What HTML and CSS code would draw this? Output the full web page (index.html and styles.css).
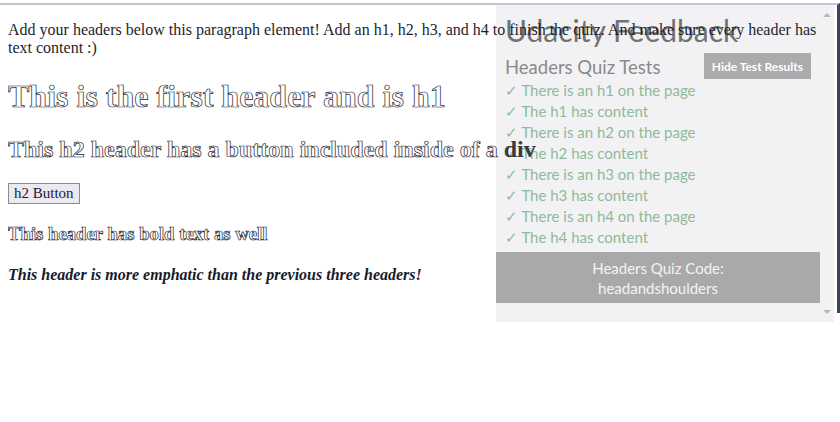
FILE: index.html
```html
<!DOCTYPE html>
<html lang="en">
<head>
<meta charset="utf-8">
<title>Headers Quiz</title>
<link rel="stylesheet" href="styles.css">
</head>
<body>
<p class="intro">Add your headers below this paragraph element! Add an h1, h2, h3, and h4 to finish the quiz. And make sure every header has text content :)</p>
<h1 class="hollow">This is the first header and is h1</h1>
<h2 class="hollow">This h2 header has a button included inside of a <span class="solid">div</span></h2>
<div class="btn-wrap"><button class="page-btn">h2 Button</button></div>
<h3 class="hollow">This header has bold text as well</h3>
<h4 class="emph"><em>This header is more emphatic than the previous three headers!</em></h4>

<aside class="feedback">
  <div class="fb-body">
    <div class="fb-title">Udacity Feedback</div>
    <div class="fb-head">
      <div class="fb-subtitle">Headers Quiz Tests</div>
      <button class="fb-hide">Hide Test Results</button>
    </div>
    <ul class="fb-tests">
      <li>✓ There is an h1 on the page</li>
      <li>✓ The h1 has content</li>
      <li>✓ There is an h2 on the page</li>
      <li>✓ The h2 has content</li>
      <li>✓ There is an h3 on the page</li>
      <li>✓ The h3 has content</li>
      <li>✓ There is an h4 on the page</li>
      <li>✓ The h4 has content</li>
    </ul>
    <div class="fb-code">Headers Quiz Code:<br>headandshoulders</div>
  </div>
  <div class="fb-scroll">
    <span class="arrow-up"></span>
    <span class="arrow-down"></span>
  </div>
</aside>
</body>
</html>
```

FILE: styles.css
```css
html {
  margin-top: 3px;
  border-top: 2px solid #c8c2d4;
  border-right: 3px solid #3f4558;
  background: #ffffff;
}

body {
  margin: 0 8px 8px;
  font-family: "Liberation Serif", "Times New Roman", serif;
  color: #1e1e2c;
}

.intro {
  font-size: 16px;
  margin: 16px 0;
}

.hollow {
  color: #ffffff;
  -webkit-text-stroke: 0.7px #1c1c30;
}

.solid {
  color: #3a3a3a;
  -webkit-text-stroke: 0;
}

h1 { font-size: 32px; margin: 21px 0; }
h2 { font-size: 24px; margin: 20px 0; }
h3 { font-size: 18.72px; margin: 18.72px 0; }
h4 { font-size: 16px; margin: 21.28px 0; }

.emph { color: #1a1a2a; }

.page-btn {
  font-family: "Liberation Serif", "Times New Roman", serif;
  font-size: 15px;
  color: #1a1a30;
  background: #ece9f0;
  border: 1px solid #8c8a98;
  padding: 1px 5px;
  height: 21px;
  line-height: 17px;
}

/* Feedback overlay */
.feedback {
  position: absolute;
  top: 5px;
  right: 6px;
  width: 338px;
  height: 317px;
  z-index: -1;
  background: #f2f2f4;
  display: flex;
  font-family: Lato, "Open Sans", sans-serif;
}

.fb-body {
  flex: 1;
  display: flex;
  flex-direction: column;
}

.fb-title {
  font-size: 30px;
  line-height: 36px;
  color: #727272;
  padding: 7px 9px 0;
}

.fb-head {
  display: flex;
  justify-content: space-between;
  align-items: flex-end;
  height: 32px;
  padding: 0 9px;
}

.fb-subtitle {
  font-size: 18.5px;
  line-height: 24px;
  color: #8a8a8a;
  margin-bottom: 1px;
}

.fb-hide {
  font-family: Lato, "Open Sans", sans-serif;
  font-weight: bold;
  font-size: 12px;
  color: #ffffff;
  background: #ababab;
  border: 0;
  height: 26px;
  padding: 0 8px;
  margin-bottom: 1px;
}

.fb-tests {
  list-style: none;
  margin: 0;
  padding: 0 9px;
  font-size: 15px;
  line-height: 21px;
  color: #8fba9a;
}

.fb-code {
  margin-top: 4px;
  height: 51px;
  background: #a9a9a9;
  color: #f4f4f4;
  text-align: center;
  font-size: 15px;
  line-height: 20px;
  padding-top: 6px;
  box-sizing: border-box;
}

.fb-scroll {
  width: 14px;
  display: flex;
  flex-direction: column;
  justify-content: space-between;
  align-items: center;
  padding: 8px 0 8px;
}

.arrow-up {
  width: 0;
  height: 0;
  border-left: 4px solid transparent;
  border-right: 4px solid transparent;
  border-bottom: 4px solid #b9b9b9;
}

.arrow-down {
  width: 0;
  height: 0;
  border-left: 4px solid transparent;
  border-right: 4px solid transparent;
  border-top: 4px solid #b9b9b9;
}
```
